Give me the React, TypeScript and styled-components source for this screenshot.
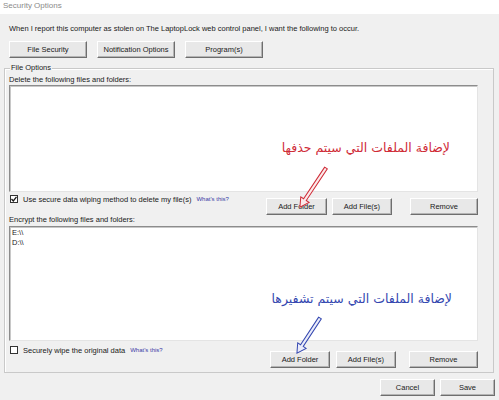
import styled, { createGlobalStyle } from "styled-components";

const GlobalStyle = createGlobalStyle`
    html, body {
        margin: 0;
        padding: 0;
        background: #f0f0f0;
    }
    * {
        box-sizing: border-box;
    }
`;

const Window = styled.div`
    position: relative;
    width: 499px;
    height: 400px;
    background: #f0f0f0;
    display: flex;
    flex-direction: column;
    font-family: "Liberation Sans", Arial, sans-serif;
    font-size: 7.5px;
    color: #1a1a1a;
    overflow: hidden;
`;

const TitleBar = styled.div`
    height: 14px;
    background: #ffffff;
    padding-left: 3px;
    line-height: 12px;
    font-size: 8px;
    color: #8a8a8a;
`;

const Header = styled.div`
    padding: 0 9px;
    display: flex;
    flex-direction: column;
`;

const Intro = styled.div`
    margin-top: 10px;
    line-height: 10px;
`;

const TabRow = styled.div`
    display: flex;
    gap: 10px;
    margin-top: 7px;
`;

const Button = styled.div<{ $w: number; $ml?: number; $mt?: number }>`
    width: ${(p) => p.$w}px;
    height: 17px;
    margin-left: ${(p) => p.$ml ?? 0}px;
    margin-top: ${(p) => p.$mt ?? 0}px;
    display: flex;
    align-items: center;
    justify-content: center;
    background: #e8e8e8;
    border: 1px solid;
    border-color: #ffffff #6e6e6e #6e6e6e #ffffff;
    box-shadow: inset -1px -1px 0 #b4b4b4;
    color: #1a1a1a;
    white-space: nowrap;
`;

const GroupBox = styled.div`
    position: relative;
    margin: 10px 5px 0 4px;
    height: 305px;
    border: 1px solid #c9c9c9;
    box-shadow: inset 1px 1px 0 #ffffff;
    padding: 6px 15px 0 4px;
    display: flex;
    flex-direction: column;
`;

const Legend = styled.span`
    position: absolute;
    top: -6px;
    left: 5px;
    padding: 0 1px;
    background: #f0f0f0;
    line-height: 10px;
`;

const Label = styled.div`
    line-height: 10px;
`;

const ListBox = styled.div<{ $h: number; $mt?: number }>`
    height: ${(p) => p.$h}px;
    margin-top: ${(p) => p.$mt ?? 0}px;
    background: #ffffff;
    border: 1px solid;
    border-color: #8c8c8c #e4e4e4 #e4e4e4 #8c8c8c;
    box-shadow: inset 1px 1px 0 #c8c8c8;
    padding: 1px 2px;
    line-height: 10px;
`;

const ActionRow = styled.div<{ $mt: number }>`
    display: flex;
    align-items: flex-start;
    margin-top: ${(p) => p.$mt}px;
`;

const CheckLine = styled.div`
    display: flex;
    align-items: center;
    height: 10px;
    padding-left: 1px;
    flex: 1;
`;

const Box = styled.span`
    width: 8px;
    height: 8px;
    border: 1px solid #333333;
    background: #ffffff;
    display: flex;
    align-items: center;
    justify-content: center;
    margin-right: 5px;
`;

const HelpLink = styled.span`
    margin-left: 5px;
    font-size: 6px;
    color: #3b3ba6;
`;

const Footer = styled.div`
    display: flex;
    justify-content: flex-end;
    gap: 5px;
    margin-top: 6px;
    padding-right: 4px;
`;

const Note = styled.div<{ $color: string; $right: number; $top: number }>`
    position: absolute;
    right: ${(p) => p.$right}px;
    top: ${(p) => p.$top}px;
    direction: rtl;
    font-family: "DejaVu Sans", sans-serif;
    font-size: 12.5px;
    line-height: 20px;
    color: ${(p) => p.$color};
    white-space: nowrap;
`;

const Overlay = styled.svg`
    position: absolute;
    left: 0;
    top: 0;
    pointer-events: none;
`;

function Check({ checked }: { checked?: boolean }) {
    return (
        <Box>
            {checked && (
                <svg width="6" height="6" viewBox="0 0 6 6">
                    <path d="M0.5 3 L2.3 5 L5.5 0.8" fill="none" stroke="#1a1a1a" strokeWidth="1.3" />
                </svg>
            )}
        </Box>
    );
}

// hollow block arrow, drawn pointing down then rotated
const arrowPath = (len: number) =>
    `M -1.6 0 L -1.6 ${len - 9} L -5 ${len - 9} L 0 ${len} L 5 ${len - 9} L 1.6 ${len - 9} L 1.6 0 Z`;

export default function App() {
    return (
        <Window>
            <GlobalStyle />
            <TitleBar>Security Options</TitleBar>
            <Header>
                <Intro>
                    When I report this computer as stolen on The LaptopLock web control panel, I want the following to occur.
                </Intro>
                <TabRow>
                    <Button $w={78}>File Security</Button>
                    <Button $w={78}>Notification Options</Button>
                    <Button $w={78}>Program(s)</Button>
                </TabRow>
            </Header>

            <GroupBox>
                <Legend>File Options</Legend>
                <Label>Delete the following files and folders:</Label>
                <ListBox $h={107} />
                <ActionRow $mt={2}>
                    <CheckLine>
                        <Check checked />
                        Use secure data wiping method to delete my file(s)
                        <HelpLink>What's this?</HelpLink>
                    </CheckLine>
                    <Button $w={61} $mt={4}>Add Folder</Button>
                    <Button $w={60} $mt={4} $ml={5}>Add File(s)</Button>
                    <Button $w={68} $mt={4} $ml={18}>Remove</Button>
                </ActionRow>
                <Label>Encrypt the following files and folders:</Label>
                <ListBox $h={115} $mt={1}>
                    E:\\
                    <br />
                    D:\\
                </ListBox>
                <ActionRow $mt={4}>
                    <CheckLine>
                        <Check />
                        Securely wipe the original data
                        <HelpLink>What's this?</HelpLink>
                    </CheckLine>
                    <Button $w={60} $mt={6}>Add Folder</Button>
                    <Button $w={60} $mt={6} $ml={6}>Add File(s)</Button>
                    <Button $w={69} $mt={6} $ml={13}>Remove</Button>
                </ActionRow>
            </GroupBox>

            <Footer>
                <Button $w={55}>Cancel</Button>
                <Button $w={55}>Save</Button>
            </Footer>

            <Note $color="#cf2b37" $right={49} $top={138}>
                لإضافة الملفات التي سيتم حذفها
            </Note>
            <Note $color="#3447b0" $right={47} $top={289}>
                لإضافة الملفات التي سيتم تشفيرها
            </Note>

            <Overlay width="499" height="400">
                <g transform="translate(326 168) rotate(33.7)">
                    <path d={arrowPath(47)} fill="#fbeaea" stroke="#cf2b37" strokeWidth="1" />
                </g>
                <g transform="translate(320 318) rotate(33.3)">
                    <path d={arrowPath(42)} fill="#eaecfa" stroke="#3447b0" strokeWidth="1" />
                </g>
            </Overlay>
        </Window>
    );
}
